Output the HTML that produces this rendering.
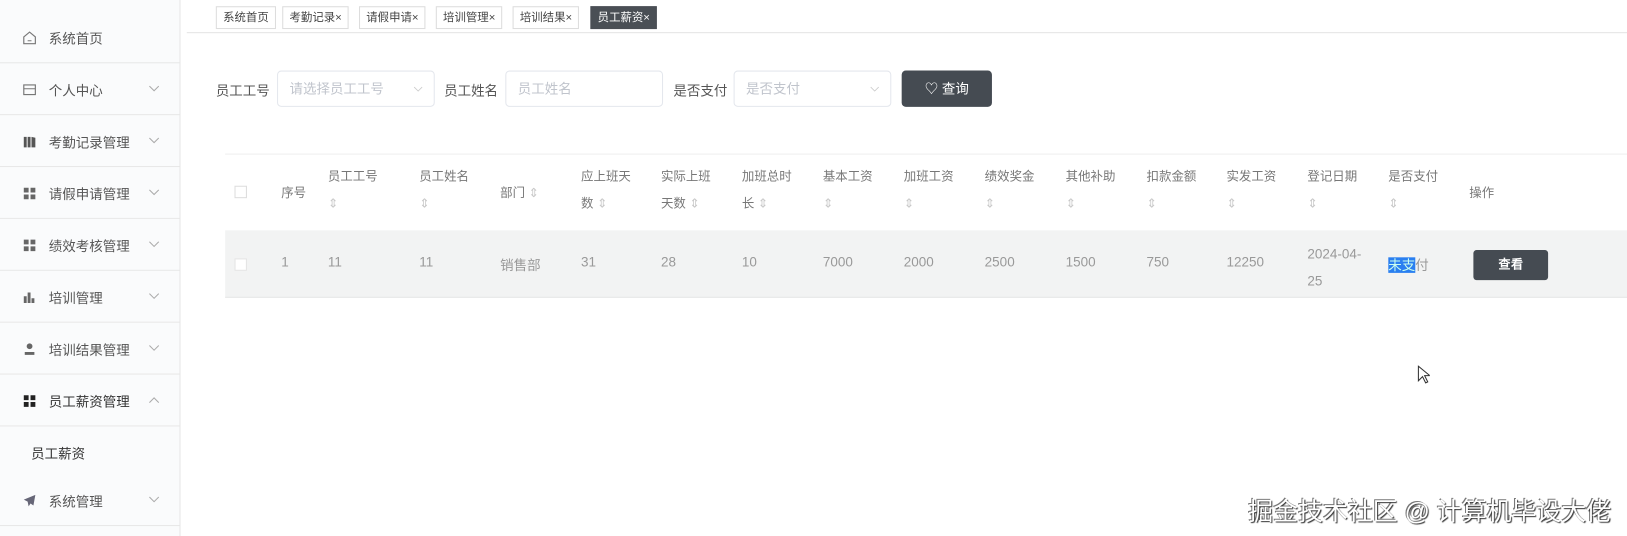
<!DOCTYPE html>
<html><head><meta charset="utf-8"><style>
*{margin:0;padding:0;box-sizing:border-box}
body{width:1627px;height:536px;overflow:hidden;background:#fff;font-family:"Liberation Sans","Noto Sans CJK SC",sans-serif;color:#606266;font-size:13px;position:relative}
#w{position:absolute;left:0;top:0;width:1568px;height:517px;transform:scale(1.0376);transform-origin:0 0}
.a{position:absolute;white-space:nowrap}
#side{position:absolute;left:0;top:0;width:174px;height:517px;background:#fafbfc;border-right:1px solid #e6e6e6}
.mi{position:absolute;left:0;width:173px;height:50px;border-bottom:1px solid #e8e8e8;font-size:13px;color:#555}
.mi .t{position:absolute;left:47px;top:16px}
.mi .ic{position:absolute;left:22px;top:19px;width:13px;height:13px}
.mi .ch{position:absolute;left:143px;top:21px;width:11px;height:7px}
.tab{position:absolute;top:6px;height:22px;border:1px solid #ddd;font-size:11px;line-height:20px;padding:0 6px;color:#444;background:#fff}
.inp{position:absolute;top:68px;height:35px;border:1px solid #e4e7ed;border-radius:4px;color:#c0c4cc;font-size:13px;line-height:33px;padding-left:11px}
.lab{position:absolute;top:77px;font-size:13px;color:#555}
.h{position:absolute;font-size:12px;color:#777;line-height:26px}
.s{color:#c8c8c8;font-size:12px}
.c{position:absolute;top:245px;font-size:13px;color:#999}
</style></head><body><div id="w">
<div id="side">
<div class="mi" style="top:11px;height:50px"><svg class="ic" viewBox="0 0 14 14"><path d="M1 6L7 1l6 5v7H1z" fill="none" stroke="#777" stroke-width="1.2"/><path d="M5 10h4" stroke="#777"/></svg><span class="t">系统首页</span></div>
<div class="mi" style="top:61px"><svg class="ic" viewBox="0 0 14 14"><rect x="1" y="2" width="12" height="10" fill="none" stroke="#777" stroke-width="1.2"/><path d="M1 6h12" stroke="#777"/></svg><span class="t">个人中心</span><svg class="ch" viewBox="0 0 11 7"><path d="M1 1l4.5 4.5L10 1" fill="none" stroke="#aaa"/></svg></div>
<div class="mi" style="top:111px"><svg class="ic" viewBox="0 0 14 14"><path d="M1 2h3v11H1zM5 2h3v11H5zM9 2l4 1v10H9z" fill="#555"/></svg><span class="t">考勤记录管理</span><svg class="ch" viewBox="0 0 11 7"><path d="M1 1l4.5 4.5L10 1" fill="none" stroke="#aaa"/></svg></div>
<div class="mi" style="top:161px"><svg class="ic" viewBox="0 0 14 14"><path d="M1 1h5v5H1zM8 1h5v5H8zM1 8h5v5H1zM8 8h5v5H8z" fill="#666"/></svg><span class="t">请假申请管理</span><svg class="ch" viewBox="0 0 11 7"><path d="M1 1l4.5 4.5L10 1" fill="none" stroke="#aaa"/></svg></div>
<div class="mi" style="top:211px"><svg class="ic" viewBox="0 0 14 14"><path d="M1 1h5v5H1zM8 1h5v5H8zM1 8h5v5H1zM8 8h5v5H8z" fill="#666"/></svg><span class="t">绩效考核管理</span><svg class="ch" viewBox="0 0 11 7"><path d="M1 1l4.5 4.5L10 1" fill="none" stroke="#aaa"/></svg></div>
<div class="mi" style="top:261px"><svg class="ic" viewBox="0 0 14 14"><path d="M1 6h3v7H1zM5 2h3v11H5zM9 8h3v5H9z" fill="#666"/></svg><span class="t">培训管理</span><svg class="ch" viewBox="0 0 11 7"><path d="M1 1l4.5 4.5L10 1" fill="none" stroke="#aaa"/></svg></div>
<div class="mi" style="top:311px"><svg class="ic" viewBox="0 0 14 14"><circle cx="7" cy="4" r="3" fill="#666"/><path d="M2 10h10v3H2z" fill="#666"/></svg><span class="t">培训结果管理</span><svg class="ch" viewBox="0 0 11 7"><path d="M1 1l4.5 4.5L10 1" fill="none" stroke="#aaa"/></svg></div>
<div class="mi" style="top:361px"><svg class="ic" viewBox="0 0 14 14"><path d="M1 1h5v5H1zM8 1h5v5H8zM1 8h5v5H1zM8 8h5v5H8z" fill="#222"/></svg><span class="t" style="color:#333">员工薪资管理</span><svg class="ch" viewBox="0 0 11 7"><path d="M1 6l4.5-4.5L10 6" fill="none" stroke="#aaa"/></svg></div>
<div class="a" style="left:30px;top:427px;color:#333">员工薪资</div>
<div class="mi" style="top:457px"><svg class="ic" viewBox="0 0 14 14"><path d="M13 1L1 6l4 2 1 5 2-3 3 2z" fill="#667"/></svg><span class="t">系统管理</span><svg class="ch" viewBox="0 0 11 7"><path d="M1 1l4.5 4.5L10 1" fill="none" stroke="#aaa"/></svg></div>
</div>
<div class="tab" style="left:208px">系统首页</div>
<div class="tab" style="left:272px">考勤记录×</div>
<div class="tab" style="left:346px">请假申请×</div>
<div class="tab" style="left:420px">培训管理×</div>
<div class="tab" style="left:494px">培训结果×</div>
<div class="tab" style="left:569px;background:#4a4f55;color:#fff;border-color:#4a4f55">员工薪资×</div>
<div class="a" style="left:180px;top:31px;width:1447px;height:1px;background:#e4e4e4"></div>
<div class="lab" style="left:208px">员工工号</div>
<div class="inp" style="left:267px;width:152px">请选择员工工号<svg class="a" style="right:10px;top:14px" width="10" height="6" viewBox="0 0 11 7"><path d="M1 1l4.5 4.5L10 1" fill="none" stroke="#ccc"/></svg></div>
<div class="lab" style="left:428px">员工姓名</div>
<div class="inp" style="left:487px;width:152px">员工姓名</div>
<div class="lab" style="left:649px">是否支付</div>
<div class="inp" style="left:707px;width:152px">是否支付<svg class="a" style="right:10px;top:14px" width="10" height="6" viewBox="0 0 11 7"><path d="M1 1l4.5 4.5L10 1" fill="none" stroke="#ccc"/></svg></div>
<div class="a" style="left:869px;top:68px;width:87px;height:35px;background:#454b52;border-radius:4px;color:#fff;font-size:13px;line-height:35px;text-align:center">♡ 查询</div>
<div class="a" style="left:217px;top:148px;width:1410px;height:1px;background:#eee"></div>
<div class="a" style="left:217px;top:222px;width:1410px;height:65px;background:#f2f3f3;border-bottom:1px solid #e6e6e6"></div>
<div class="a" style="left:226px;top:179px;width:12px;height:12px;border:1px solid #ddd;background:#fff"></div>
<div class="h" style="left:271px;top:173px">序号</div>
<div class="h" style="left:316px;top:157px">员工工号<br><span class="s">⇕</span></div>
<div class="h" style="left:404px;top:157px">员工姓名<br><span class="s">⇕</span></div>
<div class="h" style="left:482px;top:173px">部门 <span class="s">⇕</span></div>
<div class="h" style="left:560px;top:157px">应上班天<br>数 <span class="s">⇕</span></div>
<div class="h" style="left:637px;top:157px">实际上班<br>天数 <span class="s">⇕</span></div>
<div class="h" style="left:715px;top:157px">加班总时<br>长 <span class="s">⇕</span></div>
<div class="h" style="left:793px;top:157px">基本工资<br><span class="s">⇕</span></div>
<div class="h" style="left:871px;top:157px">加班工资<br><span class="s">⇕</span></div>
<div class="h" style="left:949px;top:157px">绩效奖金<br><span class="s">⇕</span></div>
<div class="h" style="left:1027px;top:157px">其他补助<br><span class="s">⇕</span></div>
<div class="h" style="left:1105px;top:157px">扣款金额<br><span class="s">⇕</span></div>
<div class="h" style="left:1182px;top:157px">实发工资<br><span class="s">⇕</span></div>
<div class="h" style="left:1260px;top:157px">登记日期<br><span class="s">⇕</span></div>
<div class="h" style="left:1338px;top:157px">是否支付<br><span class="s">⇕</span></div>
<div class="h" style="left:1416px;top:173px">操作</div>
<div class="a" style="left:226px;top:249px;width:12px;height:12px;border:1px solid #e4e4e4;background:#fff"></div>
<div class="c" style="left:271px">1</div>
<div class="c" style="left:316px">11</div>
<div class="c" style="left:404px">11</div>
<div class="c" style="left:482px">销售部</div>
<div class="c" style="left:560px">31</div>
<div class="c" style="left:637px">28</div>
<div class="c" style="left:715px">10</div>
<div class="c" style="left:793px">7000</div>
<div class="c" style="left:871px">2000</div>
<div class="c" style="left:949px">2500</div>
<div class="c" style="left:1027px">1500</div>
<div class="c" style="left:1105px">750</div>
<div class="c" style="left:1182px">12250</div>
<div class="c" style="left:1260px;top:232px;line-height:26px">2024-04-<br>25</div>
<div class="c" style="left:1338px"><span style="background:#2a7ff0;color:#cfe">未支</span>付</div>
<div class="a" style="left:1420px;top:241px;width:72px;height:29px;background:#454b52;border-radius:3px;color:#fff;font-size:12px;line-height:29px;text-align:center;font-weight:bold">查看</div>
<svg class="a" style="left:1366px;top:352px" width="12" height="18" viewBox="0 0 12 18"><path d="M1 1v14l4-4 3 6 2-1-3-6h5z" fill="#fff" stroke="#333"/></svg>
<div class="a" style="left:1203px;top:473px;font-size:24px;color:#fff;text-shadow:1px 1px 1px #333,-1px -1px 0 #777">掘金技术社区 @ 计算机毕设大佬</div>
</div></body></html>
